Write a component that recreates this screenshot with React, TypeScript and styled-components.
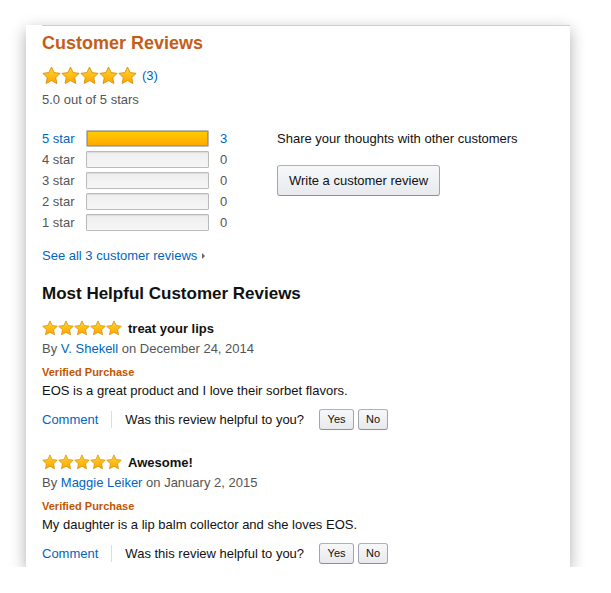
import React from "react";
import styled, { createGlobalStyle } from "styled-components";

const GlobalStyle = createGlobalStyle`
  html, body { margin: 0; padding: 0; background: #fff; }
  body {
    font-family: "Liberation Sans", Arial, sans-serif;
    font-size: 13px;
    color: #111;
  }
`;

const Card = styled.div`
  margin: 25px 0 0 26px;
  width: 544px;
  height: 542px;
  background: #fff;
  box-shadow: 0 5px 15px rgba(0, 0, 0, 0.32);
  padding-left: 16px;
  box-sizing: border-box;
  overflow: hidden;
`;

const Inner = styled.div`
  border-top: 1px solid #d0d0d0;
  padding-top: 6px;
`;

const Title = styled.h2`
  margin: 0;
  font-size: 18px;
  line-height: 22px;
  font-weight: bold;
  color: #c65d17;
`;

const StarsRow = styled.div<{ $mt: number }>`
  display: flex;
  align-items: center;
  margin-top: ${(p) => p.$mt}px;
`;

const StarGroup = styled.div<{ $gap: number }>`
  display: flex;
  gap: ${(p) => p.$gap}px;
`;

const Link = styled.a`
  color: #0066c0;
  text-decoration: none;
  cursor: pointer;
`;

const CountLink = styled(Link)`
  margin-left: 5px;
  font-size: 13px;
`;

const Muted = styled.div`
  color: #555;
  line-height: 19px;
  margin-top: 5px;
`;

const Histogram = styled.div`
  display: flex;
  margin-top: 21px;
`;

const HistLeft = styled.div`
  width: 235px;
  display: flex;
  flex-direction: column;
  gap: 4px;
`;

const HistRow = styled.div`
  display: flex;
  align-items: center;
  height: 17px;
`;

const HistLabel = styled.span<{ $active: boolean }>`
  width: 44px;
  color: ${(p) => (p.$active ? "#0066c0" : "#555")};
`;

const Bar = styled.div`
  width: 123px;
  height: 17px;
  box-sizing: border-box;
  border: 1px solid #bbb;
  border-radius: 1px;
  background: linear-gradient(#eee, #f6f6f6);
  box-shadow: inset 0 1px 1px rgba(0, 0, 0, 0.08);
  overflow: hidden;
`;

const BarFill = styled.div`
  height: 100%;
  background: linear-gradient(#ffce00, #ffa700);
  box-shadow: inset 0 0 0 1px #d09a00;
`;

const HistCount = styled.span<{ $active: boolean }>`
  margin-left: 11px;
  color: ${(p) => (p.$active ? "#0066c0" : "#555")};
`;

const HistRight = styled.div`
  display: flex;
  flex-direction: column;
  align-items: flex-start;
`;

const ShareText = styled.div`
  line-height: 17px;
  color: #111;
`;

const WriteButton = styled.button`
  margin-top: 18px;
  height: 31px;
  width: 163px;
  padding: 0;
  border: 1px solid #adb1b8;
  border-color: #adb1b8 #a2a6ac #8d9096;
  border-radius: 3px;
  background: linear-gradient(#f7f8fa, #e7e9ec);
  font-family: "Liberation Sans", Arial, sans-serif;
  font-size: 13px;
  color: #111;
`;

const SeeAll = styled(Link)`
  display: inline-flex;
  align-items: center;
  margin-top: 15px;
  line-height: 19px;
`;

const Caret = styled.span`
  display: inline-block;
  margin-left: 5px;
  width: 0;
  height: 0;
  border-top: 3px solid transparent;
  border-bottom: 3px solid transparent;
  border-left: 3px solid #666;
`;

const SectionTitle = styled.h3`
  margin: 18px 0 0;
  font-size: 17px;
  line-height: 22px;
  font-weight: bold;
  color: #111;
`;

const Review = styled.div<{ $mt: number }>`
  margin-top: ${(p) => p.$mt}px;
`;

const ReviewTitle = styled.span`
  margin-left: 6px;
  font-weight: bold;
  font-size: 13px;
  color: #111;
`;

const ByLine = styled.div`
  margin-top: 3px;
  line-height: 19px;
  color: #555;
`;

const Verified = styled.div`
  margin-top: 7px;
  font-size: 11px;
  line-height: 15px;
  font-weight: bold;
  color: #c45500;
`;

const Body = styled.div`
  margin-top: 1px;
  line-height: 19px;
  color: #111;
`;

const Actions = styled.div`
  display: flex;
  align-items: center;
  height: 22px;
  margin-top: 8px;
`;

const Sep = styled.span`
  width: 1px;
  height: 17px;
  background: #ddd;
  margin: 0 13px 0 13px;
`;

const Helpful = styled.span`
  color: #111;
  margin-right: 15px;
`;

const SmallButton = styled.button<{ $w: number }>`
  width: ${(p) => p.$w}px;
  height: 21px;
  margin-right: 4px;
  padding: 0;
  border: 1px solid #adb1b8;
  border-color: #adb1b8 #a2a6ac #8d9096;
  border-radius: 3px;
  background: linear-gradient(#f7f8fa, #e7e9ec);
  font-family: "Liberation Sans", Arial, sans-serif;
  font-size: 11px;
  color: #111;
`;

const Star: React.FC<{ size: number; id: string }> = ({ size, id }) => (
  <svg width={size} height={size} viewBox="0 0 20 20">
    <defs>
      <linearGradient id={id} x1="0" y1="0" x2="0" y2="1">
        <stop offset="0" stopColor="#ffd633" />
        <stop offset="1" stopColor="#ffa400" />
      </linearGradient>
    </defs>
    <path
      d="M10 1.1l2.75 5.85 6.35.8-4.65 4.4 1.2 6.3L10 15.35l-5.65 3.1 1.2-6.3L.9 7.75l6.35-.8z"
      fill={`url(#${id})`}
      stroke="#d48d00"
      strokeWidth="0.9"
      strokeLinejoin="round"
    />
  </svg>
);

const Stars: React.FC<{ size: number; gap: number; prefix: string }> = ({ size, gap, prefix }) => (
  <StarGroup $gap={gap}>
    {[0, 1, 2, 3, 4].map((i) => (
      <Star key={i} size={size} id={`${prefix}-${i}`} />
    ))}
  </StarGroup>
);

const hist = [
  { label: "5 star", count: 3, pct: 100 },
  { label: "4 star", count: 0, pct: 0 },
  { label: "3 star", count: 0, pct: 0 },
  { label: "2 star", count: 0, pct: 0 },
  { label: "1 star", count: 0, pct: 0 },
];

const reviews = [
  {
    title: "treat your lips",
    author: "V. Shekell",
    date: "December 24, 2014",
    body: "EOS is a great product and I love their sorbet flavors.",
  },
  {
    title: "Awesome!",
    author: "Maggie Leiker",
    date: "January 2, 2015",
    body: "My daughter is a lip balm collector and she loves EOS.",
  },
];

export default function App() {
  return (
    <>
      <GlobalStyle />
      <Card>
        <Inner>
          <Title>Customer Reviews</Title>
          <StarsRow $mt={12}>
            <Stars size={19} gap={0} prefix="big" />
            <CountLink>(3)</CountLink>
          </StarsRow>
          <Muted>5.0 out of 5 stars</Muted>
          <Histogram>
            <HistLeft>
              {hist.map((h) => (
                <HistRow key={h.label}>
                  <HistLabel $active={h.count > 0}>{h.label}</HistLabel>
                  <Bar>{h.pct > 0 && <BarFill style={{ width: `${h.pct}%` }} />}</Bar>
                  <HistCount $active={h.count > 0}>{h.count}</HistCount>
                </HistRow>
              ))}
            </HistLeft>
            <HistRight>
              <ShareText>Share your thoughts with other customers</ShareText>
              <WriteButton>Write a customer review</WriteButton>
            </HistRight>
          </Histogram>
          <SeeAll>
            See all 3 customer reviews
            <Caret />
          </SeeAll>
          <SectionTitle>Most Helpful Customer Reviews</SectionTitle>
          {reviews.map((r, idx) => (
            <Review key={r.title} $mt={idx === 0 ? 15 : 24}>
              <StarsRow $mt={0}>
                <Stars size={16} gap={0} prefix={`r${idx}`} />
                <ReviewTitle>{r.title}</ReviewTitle>
              </StarsRow>
              <ByLine>
                By <Link>{r.author}</Link> on {r.date}
              </ByLine>
              <Verified>Verified Purchase</Verified>
              <Body>{r.body}</Body>
              <Actions>
                <Link>Comment</Link>
                <Sep />
                <Helpful>Was this review helpful to you?</Helpful>
                <SmallButton $w={35}>Yes</SmallButton>
                <SmallButton $w={30}>No</SmallButton>
              </Actions>
            </Review>
          ))}
        </Inner>
      </Card>
    </>
  );
}
